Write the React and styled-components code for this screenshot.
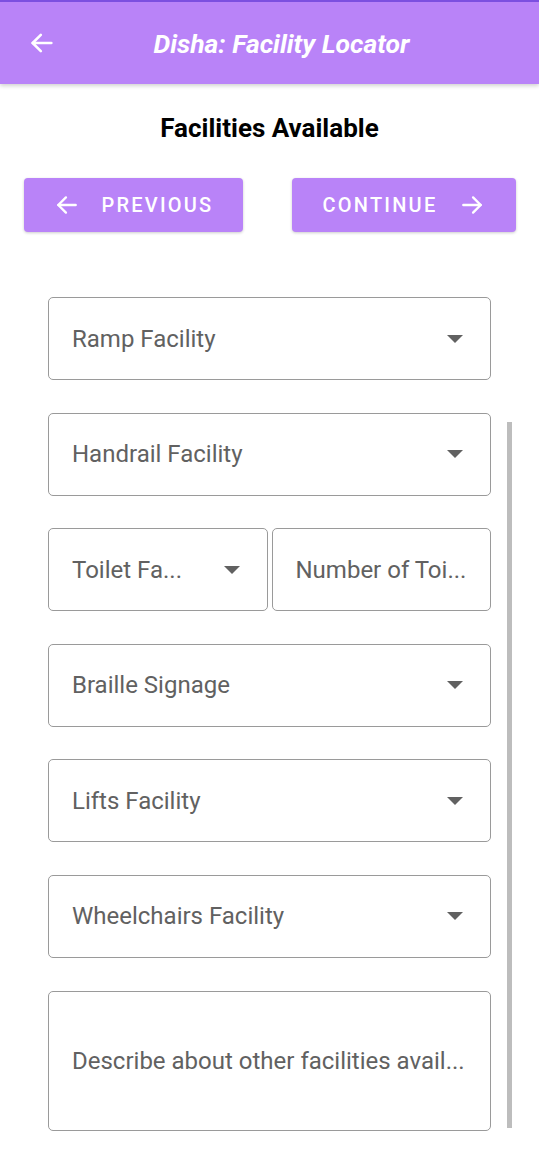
import React from "react";
import styled, { createGlobalStyle } from "styled-components";

const Global = createGlobalStyle`
  html, body { margin: 0; padding: 0; background: #fff; }
  body { font-family: Roboto, "Noto Sans", sans-serif; width: 539px; height: 1150px; overflow: hidden; }
`;

const Page = styled.div`
  width: 539px;
  height: 1150px;
  position: relative;
  overflow: hidden;
  background: #fff;
`;

const Header = styled.header`
  height: 82px;
  border-top: 2px solid #7c4fe0;
  background: #b983f8;
  display: flex;
  align-items: center;
  box-shadow: 0 2px 4px rgba(0, 0, 0, 0.18);
  position: relative;
  z-index: 1;
`;

const BackBtn = styled.div`
  width: 30px;
  margin-left: 28px;
  display: flex;
  align-items: center;
  color: #fff;
`;

const HeaderTitle = styled.h1`
  flex: 1;
  margin: 0;
  padding-right: 34px;
  text-align: center;
  color: #fff;
  font-size: 26.5px;
  font-weight: 700;
  font-style: italic;
`;

const SubTitle = styled.h2`
  margin: 30px 0 0;
  text-align: center;
  font-size: 26px;
  font-weight: 700;
  color: #000;
  line-height: 28px;
`;

const NavRow = styled.div`
  display: flex;
  justify-content: space-between;
  padding: 0 23px 0 24px;
  margin-top: 36px;
`;

const NavButton = styled.button`
  width: ${(p) => p.$w}px;
  height: 54px;
  border: none;
  border-radius: 4px;
  background: #b983f8;
  color: #fff;
  font-family: Roboto, sans-serif;
  font-size: 20px;
  font-weight: 500;
  letter-spacing: 2.2px;
  display: flex;
  align-items: center;
  justify-content: center;
  gap: 22px;
  box-shadow: 0 1px 3px rgba(0, 0, 0, 0.2);
  padding: 0;
`;

const Fields = styled.div`
  margin-top: 65px;
  padding: 0 48px;
  display: flex;
  flex-direction: column;
  gap: 32.6px;
`;

const Box = styled.div`
  height: ${(p) => p.$h || 83}px;
  border: 1px solid #9a9a9a;
  border-radius: 5px;
  box-sizing: border-box;
  display: flex;
  align-items: center;
  padding: 0 24px 0 23px;
  flex: ${(p) => (p.$grow ? 1 : "none")};
  min-width: 0;
`;

const Label = styled.span`
  flex: 1;
  font-size: 24px;
  color: #616161;
  white-space: nowrap;
  overflow: hidden;
`;

const Caret = styled.span`
  width: 0;
  height: 0;
  border-left: 8px solid transparent;
  border-right: 8px solid transparent;
  border-top: 8px solid #616161;
  margin-right: 3px;
`;

const Pair = styled.div`
  display: flex;
  gap: 4px;
`;

const Scrollbar = styled.div`
  position: absolute;
  left: 507px;
  top: 422px;
  width: 5px;
  height: 706px;
  background: #bdbdbd;
`;

const Arrow = ({ dir = "left", size = 26 }) => (
  <svg width={size} height={size} viewBox="0 0 24 24" fill="none" stroke="#fff" strokeWidth="2.2" strokeLinecap="round" strokeLinejoin="round">
    {dir === "left" ? (
      <>
        <path d="M20 12H4" />
        <path d="M11 5l-7 7 7 7" />
      </>
    ) : (
      <>
        <path d="M4 12h16" />
        <path d="M13 5l7 7-7 7" />
      </>
    )}
  </svg>
);

const Select = ({ label }) => (
  <Box>
    <Label>{label}</Label>
    <Caret />
  </Box>
);

export default function App() {
  return (
    <Page>
      <Global />
      <Header>
        <BackBtn>
          <Arrow dir="left" size={28} />
        </BackBtn>
        <HeaderTitle>Disha: Facility Locator</HeaderTitle>
      </Header>
      <SubTitle>Facilities Available</SubTitle>
      <NavRow>
        <NavButton $w={219}>
          <Arrow dir="left" />
          PREVIOUS
        </NavButton>
        <NavButton $w={224}>
          CONTINUE
          <Arrow dir="right" />
        </NavButton>
      </NavRow>
      <Fields>
        <Select label="Ramp Facility" />
        <Select label="Handrail Facility" />
        <Pair>
          <Box $grow>
            <Label>Toilet Fa...</Label>
            <Caret />
          </Box>
          <Box $grow>
            <Label>Number of Toi...</Label>
          </Box>
        </Pair>
        <Select label="Braille Signage" />
        <Select label="Lifts Facility" />
        <Select label="Wheelchairs Facility" />
        <Box $h={140}>
          <Label>Describe about other facilities avail...</Label>
        </Box>
      </Fields>
      <Scrollbar />
    </Page>
  );
}
